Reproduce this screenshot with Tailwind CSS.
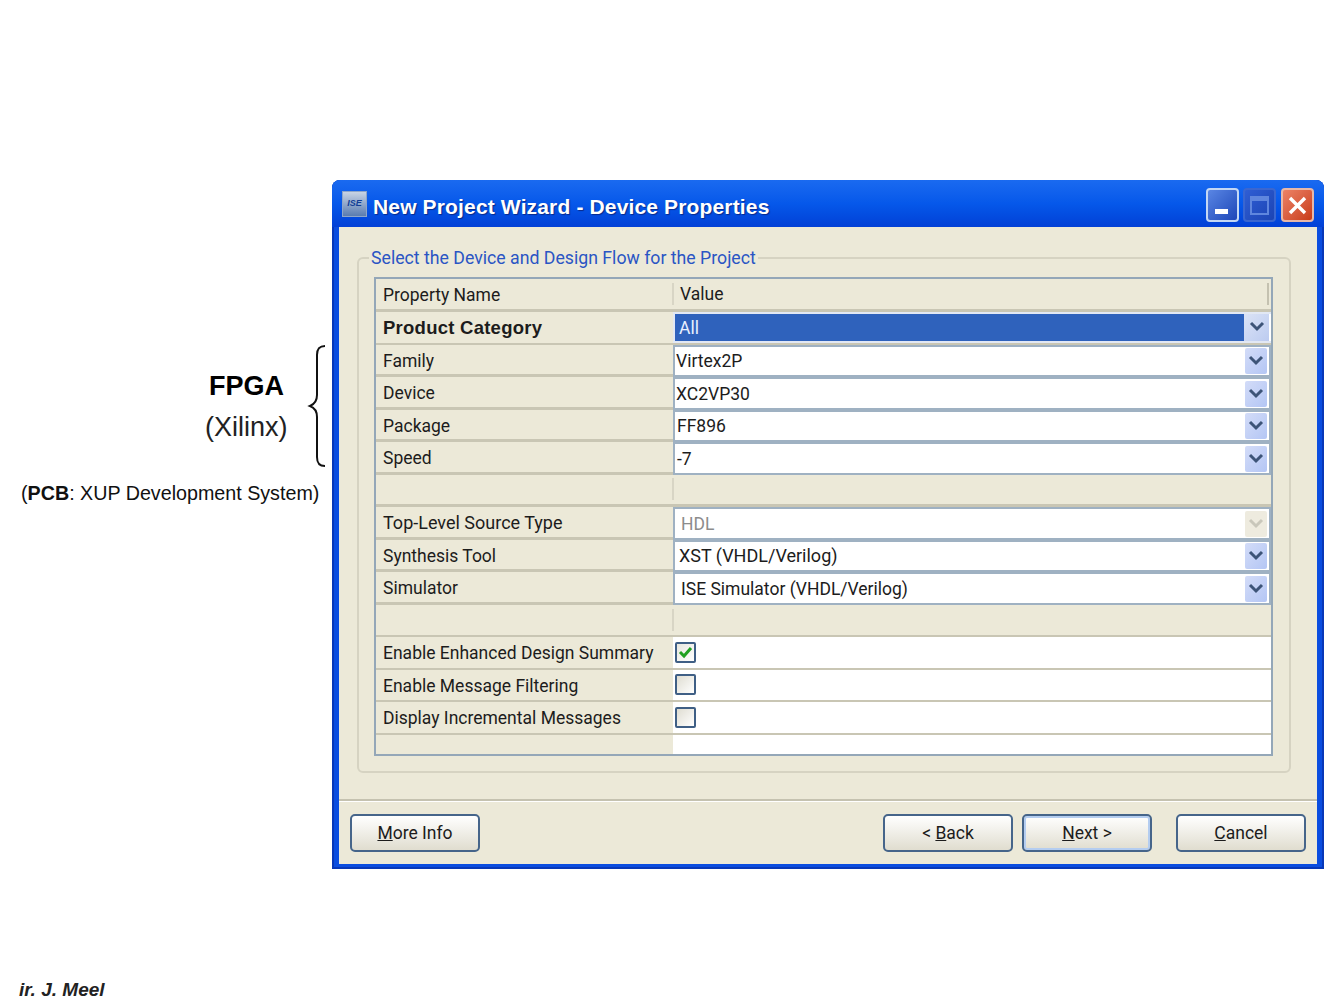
<!DOCTYPE html>
<html lang="en">
<head>
    <meta charset="UTF-8">
    <meta name="viewport" content="width=device-width, initial-scale=1.0">
    <title>New Project Wizard - Device Properties</title>
    <script src="https://cdn.jsdelivr.net/npm/@tailwindcss/browser@4"></script>
</head>
<body class="bg-white font-['Liberation_Sans',Arial,sans-serif] text-[#111]">
    <div class="relative w-[1344px] h-[1008px] overflow-hidden">

        <!-- Slide annotations -->
        <div class="absolute left-[209px] top-[370px] text-[27px] leading-[32px] font-bold text-black">FPGA</div>
        <div class="absolute left-[205px] top-[411px] text-[27px] leading-[32px] text-[#222]">(Xilinx)</div>
        <svg class="absolute left-[306px] top-[343px]" width="22" height="126" viewBox="0 0 22 126" fill="none">
            <path d="M19 3 C13 3 11 6 11 12 L11 52 C11 58 9 61 4 63 C9 65 11 68 11 74 L11 114 C11 120 13 123 19 123" stroke="#111" stroke-width="2"/>
        </svg>
        <div class="absolute left-[21px] top-[481px] text-[19.7px] leading-[25px] text-[#111] whitespace-nowrap">(<b>PCB</b>: XUP Development System)</div>
        <div class="absolute left-[19px] top-[978px] text-[19px] leading-[23px] font-bold italic text-[#222] whitespace-nowrap">ir. J. Meel</div>

        <!-- Wizard window -->
        <div class="absolute left-[332px] top-[180px] w-[992px] h-[689px] flex flex-col rounded-t-[8px] bg-[#0a4de0] shadow-[inset_2px_0_0_#0838b8,inset_-2px_0_0_#0838b8,inset_0_-2px_0_#0838b8]">
            <!-- Title bar -->
            <div class="h-[47px] shrink-0 flex items-center rounded-t-[8px] bg-gradient-to-b from-[#1a6af0] via-[#0658ea] to-[#0340d6] pl-[10px] pr-[10px]">
                <div class="w-[25px] h-[26px] flex items-center justify-center bg-gradient-to-b from-[#c8d4e4] to-[#5a7cb0] border border-[#8fa6c8] text-[9px] leading-none font-bold italic text-[#123f96]">ISE</div>
                <div class="ml-[6px] pt-[6px] text-[21px] font-bold tracking-[0.15px] text-white [text-shadow:1px_1px_1px_#0a2a8a] whitespace-nowrap">New Project Wizard - Device Properties</div>
                <div class="ml-auto flex gap-[4px] pt-[3px]">
                    <div class="w-[33px] h-[34px] rounded-[4px] border-2 border-[#c4d8f4] bg-gradient-to-br from-[#5a86e4] to-[#1f46b8] flex items-end pl-[7px] pb-[6px]">
                        <div class="w-[13px] h-[5px] bg-white"></div>
                    </div>
                    <div class="w-[33px] h-[34px] rounded-[4px] border-2 border-[#3a66d0] bg-gradient-to-br from-[#2f5ed4] to-[#1c44b4] flex items-center justify-center">
                        <div class="w-[19px] h-[19px] border-2 border-t-[5px] border-[#5f86de]"></div>
                    </div>
                    <div class="w-[33px] h-[34px] ml-[1px] rounded-[4px] border-2 border-[#e8b8a8] bg-gradient-to-br from-[#ec8266] to-[#c83a14] flex items-center justify-center">
                        <svg width="21" height="21" viewBox="0 0 21 21" fill="none"><path d="M3 3 L18 18 M18 3 L3 18" stroke="#fff" stroke-width="3.4"/></svg>
                    </div>
                </div>
            </div>

            <!-- Client area -->
            <div class="flex-1 mx-[7px] mb-[5px] bg-[#ece9d8] flex flex-col">
                <div class="h-[572px] pl-[18px] pr-[26px] pt-[19px]">
                    <fieldset class="h-[527px] border-2 border-[#d6d3c2] rounded-[6px] pl-[15px] pr-[16px] pb-[16px]">
                        <legend class="ml-[-5px] px-[2px] font-['Roboto',sans-serif] text-[17.7px] leading-[24px] text-[#2a55c4] whitespace-nowrap">Select the Device and Design Flow for the Project</legend>

                        <!-- Property table -->
                        <div class="mt-[7px] border-2 border-[#94a7b8] bg-[#ece9d8] font-['Roboto',sans-serif] text-[17.5px] leading-[24px] text-[#1c1c1c]">
                            <div class="h-[33px] flex items-center border-b-[3px] border-[#c9c6b4]">
                                <div class="w-[296px] pl-[7px] pt-[2px]">Property Name</div>
                                <div class="h-[22px] border-l-2 border-[#d8d5c5] pl-[6px] flex-1 leading-[22px]">Value</div>
                                <div class="h-[22px] border-r-2 border-[#c4c1b0] mr-[2px]"></div>
                            </div>

                            <div class="h-[32.5px] flex border-b-2 border-[#c9c6b4]">
                                <div class="w-[297px] pl-[7px] pt-[1px] flex items-center font-['Liberation_Sans',sans-serif] text-[18.5px] font-bold tracking-[0.25px]">Product Category</div>
                                <div class="flex-1 flex items-center border-2 border-[#e2e8f4] border-r-0 bg-white">
                                    <div class="flex-1 h-full bg-[#2f62bc] text-[#e8f0ff] pl-[4px] pt-[1px] flex items-center">All</div>
                                    <div class="w-[25px] mr-[2px] h-full flex items-center justify-center bg-gradient-to-br from-[#dbe3f6] to-[#bccbf0]">
                                        <svg width="16" height="12" viewBox="0 0 16 12" fill="none"><path d="M2 2 L8 8 L14 2" stroke="#3d5478" stroke-width="3"/></svg>
                                    </div>
                                </div>
                            </div>

                            <div class="h-[32.5px] flex">
                                <div class="w-[297px] pl-[7px] pt-[3px] flex items-center border-b-[3px] border-[#c9c6b4]">Family</div>
                                <div class="flex-1 flex items-center border-2 border-[#9fb1c2] bg-white pl-[1px] pt-[1px]">
                                    <div class="flex-1">Virtex2P</div>
                                    <div class="w-[22px] h-[26px] mr-[2px] rounded-[2px] flex items-center justify-center bg-gradient-to-br from-[#d3dcf8] to-[#b4c6f4]">
                                        <svg width="16" height="12" viewBox="0 0 16 12" fill="none"><path d="M2 2 L8 8 L14 2" stroke="#3d5478" stroke-width="3"/></svg>
                                    </div>
                                </div>
                            </div>
                            <div class="h-[32.5px] flex">
                                <div class="w-[297px] pl-[7px] pt-[3px] flex items-center border-b-[3px] border-[#c9c6b4]">Device</div>
                                <div class="flex-1 flex items-center border-2 border-[#9fb1c2] bg-white pl-[1px] pt-[1px]">
                                    <div class="flex-1">XC2VP30</div>
                                    <div class="w-[22px] h-[26px] mr-[2px] rounded-[2px] flex items-center justify-center bg-gradient-to-br from-[#d3dcf8] to-[#b4c6f4]">
                                        <svg width="16" height="12" viewBox="0 0 16 12" fill="none"><path d="M2 2 L8 8 L14 2" stroke="#3d5478" stroke-width="3"/></svg>
                                    </div>
                                </div>
                            </div>
                            <div class="h-[32.5px] flex">
                                <div class="w-[297px] pl-[7px] pt-[3px] flex items-center border-b-[3px] border-[#c9c6b4]">Package</div>
                                <div class="flex-1 flex items-center border-2 border-[#9fb1c2] bg-white pl-[2px] pt-[1px]">
                                    <div class="flex-1">FF896</div>
                                    <div class="w-[22px] h-[26px] mr-[2px] rounded-[2px] flex items-center justify-center bg-gradient-to-br from-[#d3dcf8] to-[#b4c6f4]">
                                        <svg width="16" height="12" viewBox="0 0 16 12" fill="none"><path d="M2 2 L8 8 L14 2" stroke="#3d5478" stroke-width="3"/></svg>
                                    </div>
                                </div>
                            </div>
                            <div class="h-[32.5px] flex">
                                <div class="w-[297px] pl-[7px] pt-[3px] flex items-center border-b-[3px] border-[#c9c6b4]">Speed</div>
                                <div class="flex-1 flex items-center border-2 border-[#9fb1c2] bg-white pl-[2px] pt-[1px]">
                                    <div class="flex-1">-7</div>
                                    <div class="w-[22px] h-[26px] mr-[2px] rounded-[2px] flex items-center justify-center bg-gradient-to-br from-[#d3dcf8] to-[#b4c6f4]">
                                        <svg width="16" height="12" viewBox="0 0 16 12" fill="none"><path d="M2 2 L8 8 L14 2" stroke="#3d5478" stroke-width="3"/></svg>
                                    </div>
                                </div>
                            </div>

                            <div class="h-[32.5px] flex items-center border-b-[3px] border-[#c9c6b4]">
                                <div class="w-[296px]"></div>
                                <div class="h-[22px] border-l-2 border-[#d8d5c5]"></div>
                            </div>

                            <div class="h-[32.5px] flex">
                                <div class="w-[297px] pl-[7px] pt-[3px] flex items-center border-b-[3px] border-[#c9c6b4] text-[18px]">Top-Level Source Type</div>
                                <div class="flex-1 flex items-center border-2 border-[#9fb1c2] bg-white pl-[6px] pt-[1px]">
                                    <div class="flex-1 text-[#8c8c8c]">HDL</div>
                                    <div class="w-[22px] h-[26px] mr-[2px] rounded-[2px] flex items-center justify-center bg-[#eeebdf]">
                                        <svg width="16" height="12" viewBox="0 0 16 12" fill="none"><path d="M2 2 L8 8 L14 2" stroke="#c9c7bb" stroke-width="3"/></svg>
                                    </div>
                                </div>
                            </div>
                            <div class="h-[32.5px] flex">
                                <div class="w-[297px] pl-[7px] pt-[3px] flex items-center border-b-[3px] border-[#c9c6b4]">Synthesis Tool</div>
                                <div class="flex-1 flex items-center border-2 border-[#9fb1c2] bg-white pl-[4px] pt-[1px]">
                                    <div class="flex-1 text-[18px]">XST (VHDL/Verilog)</div>
                                    <div class="w-[22px] h-[26px] mr-[2px] rounded-[2px] flex items-center justify-center bg-gradient-to-br from-[#d3dcf8] to-[#b4c6f4]">
                                        <svg width="16" height="12" viewBox="0 0 16 12" fill="none"><path d="M2 2 L8 8 L14 2" stroke="#3d5478" stroke-width="3"/></svg>
                                    </div>
                                </div>
                            </div>
                            <div class="h-[32.5px] flex">
                                <div class="w-[297px] pl-[7px] pt-[3px] flex items-center border-b-[3px] border-[#c9c6b4]">Simulator</div>
                                <div class="flex-1 flex items-center border-2 border-[#9fb1c2] bg-white pl-[6px] pt-[1px]">
                                    <div class="flex-1">ISE Simulator (VHDL/Verilog)</div>
                                    <div class="w-[22px] h-[26px] mr-[2px] rounded-[2px] flex items-center justify-center bg-gradient-to-br from-[#d3dcf8] to-[#b4c6f4]">
                                        <svg width="16" height="12" viewBox="0 0 16 12" fill="none"><path d="M2 2 L8 8 L14 2" stroke="#3d5478" stroke-width="3"/></svg>
                                    </div>
                                </div>
                            </div>

                            <div class="h-[32.5px] flex items-center border-b-2 border-[#c9c6b4]">
                                <div class="w-[296px]"></div>
                                <div class="h-[22px] border-l-2 border-[#d8d5c5]"></div>
                            </div>

                            <div class="h-[32.5px] flex border-b-2 border-[#c9c6b4]">
                                <div class="w-[297px] pl-[7px] pt-[2px] flex items-center whitespace-nowrap">Enable Enhanced Design Summary</div>
                                <div class="flex-1 flex items-center bg-white pl-[2px]">
                                    <div class="w-[21px] h-[21px] border-2 border-[#3f5f85] rounded-[2px] bg-gradient-to-br from-[#e8e7de] to-white flex items-center justify-center">
                                        <svg width="15" height="13" viewBox="0 0 15 13" fill="none"><path d="M2 6 L6 10 L13 2" stroke="#21a121" stroke-width="3"/></svg>
                                    </div>
                                </div>
                            </div>
                            <div class="h-[32.5px] flex border-b-2 border-[#c9c6b4]">
                                <div class="w-[297px] pl-[7px] pt-[2px] flex items-center whitespace-nowrap">Enable Message Filtering</div>
                                <div class="flex-1 flex items-center bg-white pl-[2px]">
                                    <div class="w-[21px] h-[21px] border-2 border-[#3f5f85] rounded-[2px] bg-gradient-to-br from-[#dfddd2] to-white"></div>
                                </div>
                            </div>
                            <div class="h-[32.5px] flex border-b-2 border-[#c9c6b4]">
                                <div class="w-[297px] pl-[7px] pt-[2px] flex items-center whitespace-nowrap">Display Incremental Messages</div>
                                <div class="flex-1 flex items-center bg-white pl-[2px]">
                                    <div class="w-[21px] h-[21px] border-2 border-[#3f5f85] rounded-[2px] bg-gradient-to-br from-[#dfddd2] to-white"></div>
                                </div>
                            </div>
                            <div class="h-[19px] flex">
                                <div class="w-[297px]"></div>
                                <div class="flex-1 bg-white"></div>
                            </div>
                        </div>
                    </fieldset>
                </div>

                <!-- Footer buttons -->
                <div class="flex-1 border-t-2 border-[#c5c2b0] shadow-[inset_0_1px_0_#fff] pl-[11px] pr-[11px] pt-[13px]">
                    <div class="flex font-['Roboto',sans-serif] text-[17.5px] leading-[24px] text-[#1c1c1c]">
                        <button class="w-[130px] h-[38px] border-2 border-[#46658a] rounded-[5px] bg-gradient-to-b from-white to-[#e0ddcf]"><u>M</u>ore Info</button>
                        <button class="ml-auto w-[130px] h-[38px] border-2 border-[#46658a] rounded-[5px] bg-gradient-to-b from-white to-[#e0ddcf]">&lt; <u>B</u>ack</button>
                        <button class="ml-[9px] w-[130px] h-[38px] border-2 border-[#46658a] rounded-[5px] bg-gradient-to-b from-white to-[#e0ddcf] shadow-[inset_0_0_0_2px_#b4cdf0]"><u>N</u>ext &gt;</button>
                        <button class="ml-[24px] w-[130px] h-[38px] border-2 border-[#46658a] rounded-[5px] bg-gradient-to-b from-white to-[#e0ddcf]"><u>C</u>ancel</button>
                    </div>
                </div>
            </div>
        </div>
    </div>
</body>
</html>
